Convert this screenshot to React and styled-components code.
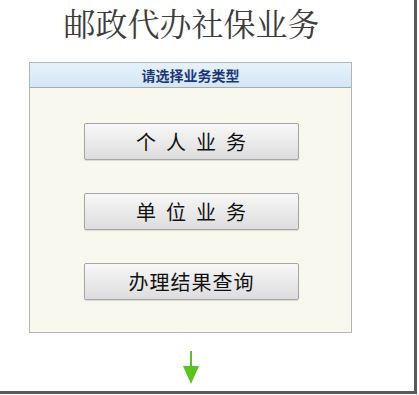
import React from 'react'
import styled, { createGlobalStyle } from 'styled-components'

const GlobalStyle = createGlobalStyle`
  html, body {
    margin: 0;
    padding: 0;
    background: #ffffff;
  }
  body {
    font-family: "Noto Serif CJK SC", "Liberation Serif", "Noto Sans CJK SC", serif;
  }
`

const Frame = styled.div`
  box-sizing: border-box;
  width: 417px;
  height: 394px;
  border-right: 3px solid #5a5a5a;
  border-bottom: 3px solid #5a5a5a;
  background: #fff;
  display: flex;
  flex-direction: column;
`

const Title = styled.h1`
  margin: 5px 0 0 0;
  width: 383px;
  text-align: center;
  font-family: "Noto Serif CJK SC", "Liberation Serif", "Noto Sans CJK SC", serif;
  font-weight: 400;
  font-size: 32px;
  line-height: 34px;
  color: #3c3c3c;
`

const Panel = styled.div`
  box-sizing: border-box;
  margin: 23px 0 0 29px;
  width: 323px;
  height: 271px;
  border: 1px solid #b4b4b4;
  background: #f8f8ef;
  display: flex;
  flex-direction: column;
`

const PanelHeader = styled.div`
  height: 24px;
  border-bottom: 1px solid #a9a9a9;
  background: linear-gradient(to bottom, #e6f2fb 0%, #d3e6f6 100%);
  display: flex;
  align-items: center;
  justify-content: center;
  font-family: "Noto Sans CJK SC", "Liberation Sans", sans-serif;
  font-weight: 700;
  font-size: 14px;
  color: #1d3677;
`

const PanelBody = styled.div`
  flex: 1;
  display: flex;
  flex-direction: column;
  align-items: center;
  gap: 33px;
  padding-top: 35px;
`

const ChoiceButton = styled.button`
  box-sizing: border-box;
  width: 215px;
  height: 37px;
  margin-left: 1px;
  border: 1px solid #a6a6a6;
  border-radius: 2px;
  background: linear-gradient(to bottom, #f8f8f8 0%, #eaeaea 50%, #dddddd 100%);
  box-shadow: 0 1px 1px rgba(0, 0, 0, 0.12);
  font-family: "Noto Sans CJK SC", "Liberation Sans", sans-serif;
  font-weight: 400;
  font-size: 20px;
  color: #111;
  letter-spacing: ${p => p.$spread ? '10px' : '1px'};
  text-indent: ${p => p.$spread ? '10px' : '1px'};
  cursor: pointer;
`

const ArrowRow = styled.div`
  width: 382px;
  display: flex;
  justify-content: center;
  margin-top: 18px;
`

const DownArrow = () => (
  <svg width="16" height="34" viewBox="0 0 16 34">
    <rect x="7" y="0" width="2" height="17" fill="#5cc21d" />
    <polygon points="0,15 16,15 8,33" fill="#5cc21d" />
  </svg>
)

const App = () => {
  return (
    <>
      <GlobalStyle />
      <Frame>
        <Title>邮政代办社保业务</Title>
        <Panel>
          <PanelHeader>请选择业务类型</PanelHeader>
          <PanelBody>
            <ChoiceButton $spread>个人业务</ChoiceButton>
            <ChoiceButton $spread>单位业务</ChoiceButton>
            <ChoiceButton>办理结果查询</ChoiceButton>
          </PanelBody>
        </Panel>
        <ArrowRow>
          <DownArrow />
        </ArrowRow>
      </Frame>
    </>
  )
}

export default App
